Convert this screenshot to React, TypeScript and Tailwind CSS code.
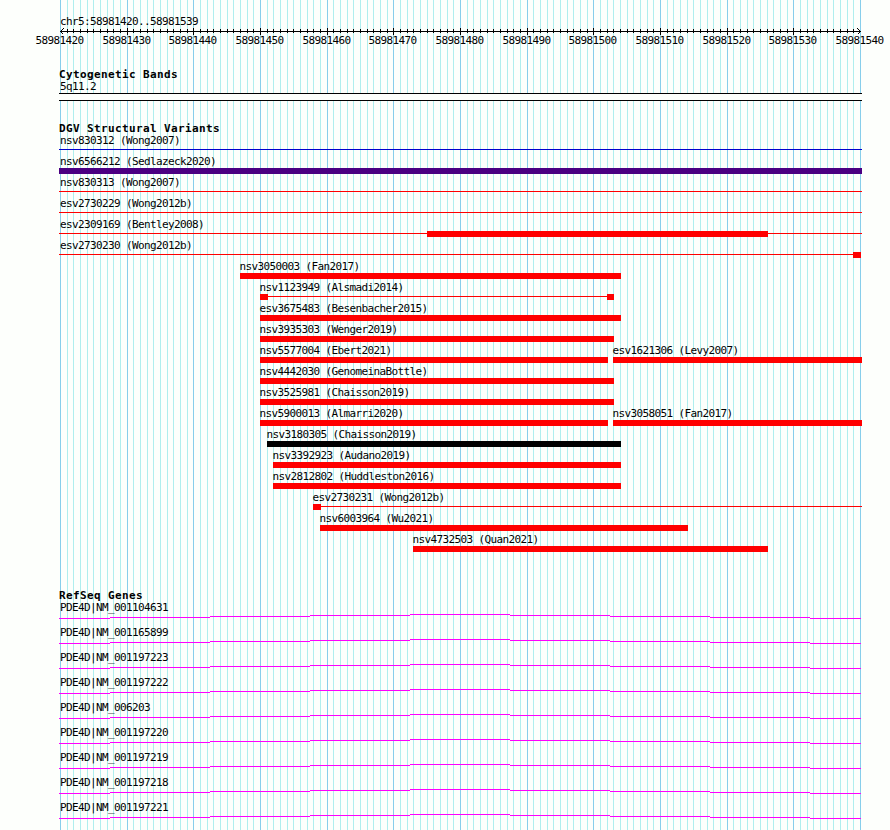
// Genome browser view of a chr5 region: ruler, cytobands, DGV variants and RefSeq genes.

const START = 58981420;
const LEFT = 60;
const PX_PER_BASE = 800 / 120;

const RED = '#ff0000';
const BLUE = '#0000cd';
const PURPLE = '#4b0082';
const BLACK = '#000000';

interface Feature {
  label: string;
  x: number;
  end: number;
  color?: string;
  // thick parts drawn on top of a thin line, [from, to]
  blocks?: [number, number][];
}

const variantRows: Feature[][] = [
  [{ label: 'nsv830312 (Wong2007)', x: 59, end: 862, color: BLUE, blocks: [] }],
  [{ label: 'nsv6566212 (Sedlazeck2020)', x: 59, end: 862, color: PURPLE }],
  [{ label: 'nsv830313 (Wong2007)', x: 59, end: 862, blocks: [] }],
  [{ label: 'esv2730229 (Wong2012b)', x: 59, end: 862, blocks: [] }],
  [{ label: 'esv2309169 (Bentley2008)', x: 59, end: 862, blocks: [[427, 768]] }],
  [{ label: 'esv2730230 (Wong2012b)', x: 59, end: 861, blocks: [[853, 861]] }],
  [{ label: 'nsv3050003 (Fan2017)', x: 240, end: 621 }],
  [{ label: 'nsv1123949 (Alsmadi2014)', x: 260, end: 614, blocks: [[260, 268], [607, 614]] }],
  [{ label: 'esv3675483 (Besenbacher2015)', x: 260, end: 621 }],
  [{ label: 'nsv3935303 (Wenger2019)', x: 260, end: 614 }],
  [
    { label: 'nsv5577004 (Ebert2021)', x: 260, end: 608 },
    { label: 'esv1621306 (Levy2007)', x: 613, end: 862 },
  ],
  [{ label: 'nsv4442030 (GenomeinaBottle)', x: 260, end: 614 }],
  [{ label: 'nsv3525981 (Chaisson2019)', x: 260, end: 614 }],
  [
    { label: 'nsv5900013 (Almarri2020)', x: 260, end: 608 },
    { label: 'nsv3058051 (Fan2017)', x: 613, end: 862 },
  ],
  [{ label: 'nsv3180305 (Chaisson2019)', x: 267, end: 621, color: BLACK }],
  [{ label: 'nsv3392923 (Audano2019)', x: 273, end: 621 }],
  [{ label: 'nsv2812802 (Huddleston2016)', x: 273, end: 621 }],
  [{ label: 'esv2730231 (Wong2012b)', x: 313, end: 862, blocks: [[313, 321]] }],
  [{ label: 'nsv6003964 (Wu2021)', x: 320, end: 688 }],
  [{ label: 'nsv4732503 (Quan2021)', x: 413, end: 768 }],
];

const genes = [
  'NM_001104631',
  'NM_001165899',
  'NM_001197223',
  'NM_001197222',
  'NM_006203',
  'NM_001197220',
  'NM_001197219',
  'NM_001197218',
  'NM_001197221',
];

// Intron hat, as [from, to, y]
const intronSteps = [
  [59, 110, 4],
  [110, 210, 3],
  [210, 310, 2],
  [310, 410, 1],
  [410, 510, 0],
  [510, 610, 1],
  [610, 710, 2],
  [710, 810, 3],
  [810, 861, 4],
];

const ticks = Array.from({ length: 121 }, (_, i) => ({
  base: START + i,
  x: Math.round(LEFT + i * PX_PER_BASE),
  major: i % 10 === 0,
}));

function Grid() {
  return (
    <svg className="absolute inset-0" width={890} height={830} shapeRendering="crispEdges">
      {ticks.map(t => (
        <rect key={t.base} x={t.x} y={0} width={1} height={830} fill={t.major ? '#87ceeb' : '#afeeee'} />
      ))}
    </svg>
  );
}

function Ruler() {
  return (
    <svg className="block mt-px overflow-visible" width={890} height={20} shapeRendering="crispEdges">
      <rect x={60} y={3} width={801} height={1} />
      {ticks.slice(1, -1).map(t => (
        <rect key={t.base} x={t.x} y={t.major ? 0 : 1} width={1} height={t.major ? 7 : 4} />
      ))}
      <path d="M63.5 0.5L60.5 3.5L63.5 6.5M857.5 0.5L860.5 3.5L857.5 6.5" fill="none" stroke="#000" />
      {ticks.filter(t => t.major).map(t => (
        <text key={t.base} x={t.x - 24.5} y={16}>{t.base}</text>
      ))}
    </svg>
  );
}

function TrackTitle({ children }: { children: string }) {
  return <h2 className="pl-[59px] font-bold tracking-[0.38px]">{children}</h2>;
}

function VariantRow({ features }: { features: Feature[] }) {
  return (
    <div className="h-[21px]">
      <svg className="block overflow-visible" width={890} height={21} shapeRendering="crispEdges">
        {features.map(f => {
          const color = f.color ?? RED;
          const blocks = f.blocks ?? [[f.x, f.end]];
          return (
            <g key={f.label}>
              <text x={Math.max(f.x - 0.5, 60)} y={9}>{f.label}</text>
              {f.blocks && <rect x={f.x} y={14} width={f.end - f.x} height={1} fill={color} />}
              {blocks.map(([from, to]) => (
                <rect key={from} x={from} y={12} width={to - from} height={6} fill={color} />
              ))}
            </g>
          );
        })}
      </svg>
    </div>
  );
}

function GeneRow({ name }: { name: string }) {
  return (
    <div className="h-[25px]">
      <p className="pl-[60px]">PDE4D|{name}</p>
      <svg className="block mt-px" width={890} height={5} shapeRendering="crispEdges">
        {intronSteps.map(([from, to, y]) => (
          <rect key={from} x={from} y={y} width={to - from} height={1} fill="#ff00ff" />
        ))}
      </svg>
    </div>
  );
}

export default function App() {
  return (
    <div className="relative w-[890px] h-[830px] overflow-hidden bg-[#fdfffc] text-black font-['DejaVu_Sans_Mono',monospace] text-[11px] leading-[11px] tracking-[-0.62px] whitespace-pre">
      <Grid />
      <div className="relative pt-4">
        <p className="pl-[60px]">chr5:58981420..58981539</p>
        <Ruler />

        <section className="mt-[21px]">
          <TrackTitle>Cytogenetic Bands</TrackTitle>
          <p className="mt-px pl-[60px]">5q11.2</p>
          <div className="mt-px ml-[59px] w-[803px] h-2 border-y border-black bg-[#fdfffc]" />
        </section>

        <section className="mt-[22px]">
          <TrackTitle>DGV Structural Variants</TrackTitle>
          <div className="mt-px">
            {variantRows.map(row => (
              <VariantRow key={row[0].label} features={row} />
            ))}
          </div>
        </section>

        <section className="mt-[35px]">
          <TrackTitle>RefSeq Genes</TrackTitle>
          <div className="mt-px">
            {genes.map(name => (
              <GeneRow key={name} name={name} />
            ))}
          </div>
        </section>
      </div>
    </div>
  );
}
